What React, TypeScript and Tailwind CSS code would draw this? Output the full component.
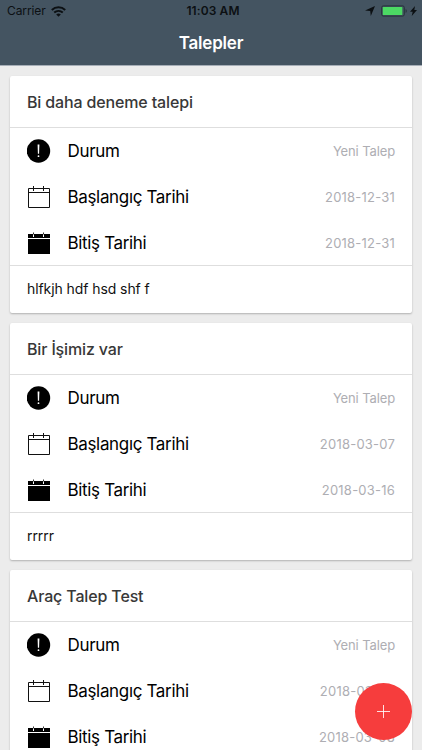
interface Request {
  title: string;
  status: string;
  start: string;
  end: string;
  note: string;
}

const requests: Request[] = [
  { title: 'Bi daha deneme talepi', status: 'Yeni Talep', start: '2018-12-31', end: '2018-12-31', note: 'hlfkjh hdf hsd shf f' },
  { title: 'Bir İşimiz var', status: 'Yeni Talep', start: '2018-03-07', end: '2018-03-16', note: 'rrrrr' },
  { title: 'Araç Talep Test', status: 'Yeni Talep', start: '2018-03-07', end: '2018-03-08', note: '' },
];

function AlertIcon() {
  return (
    <svg className="w-6 h-6" viewBox="0 0 24 24">
      <circle cx="11.5" cy="12" r="11.7" />
      <path d="M10.6 5.5h1.8l-.3 9.3h-1.2z" fill="#fff" />
      <circle cx="11.5" cy="17.2" r="0.9" fill="#fff" />
    </svg>
  );
}

function CalendarIcon() {
  return (
    <svg className="w-6 h-6" viewBox="0 0 24 24" fill="none" stroke="#111" strokeWidth="1">
      <path d="M1.5 3.5h21v19h-21zM1.5 7.5h21M6.5 1v5M16.5 1v5" />
    </svg>
  );
}

function CalendarFilledIcon() {
  return (
    <svg className="w-6 h-6" viewBox="0 0 24 24">
      <path d="M1 3h22v4H1zM1 8h22v15H1z" />
      <path d="M6.5 3v3M16.5 3v3" stroke="#fff" />
      <path d="M6.5 1.5v2M16.5 1.5v2" stroke="#333" />
    </svg>
  );
}

interface RowProps {
  icon: React.ReactNode;
  label: string;
  children: React.ReactNode;
}

function Row({ icon, label, children }: RowProps) {
  return (
    <div className="h-[46px] pl-[17px] pr-[17px] flex items-center">
      {icon}
      <span className="ml-[16.5px] pt-0.5 text-[17px] tracking-[-0.34px] text-black">{label}</span>
      <span className="ml-auto pt-px text-[13px] text-[#aeaeb3]">{children}</span>
    </div>
  );
}

function RequestCard({ request }: { request: Request }) {
  return (
    <article className="h-[237px] shrink-0 bg-white rounded-[2px] shadow-[0_1px_2px_rgba(0,0,0,0.25)]">
      <h2 className="h-[52px] px-[17px] pt-px flex items-center border-b border-[#dedede] text-base font-medium tracking-[-0.15px] text-[#383838]">
        {request.title}
      </h2>
      <div className="h-[138px] border-b border-[#dedede]">
        <Row icon={<AlertIcon />} label="Durum">
          <span className="tracking-[-0.12px]">{request.status}</span>
        </Row>
        <Row icon={<CalendarIcon />} label="Başlangıç Tarihi">
          <span className="tracking-[0.22px]">{request.start}</span>
        </Row>
        <Row icon={<CalendarFilledIcon />} label="Bitiş Tarihi">
          <span className="tracking-[0.22px]">{request.end}</span>
        </Row>
      </div>
      <p className="h-[46px] px-[17px] flex items-center text-sm tracking-[-0.08px] text-[#111]">{request.note}</p>
    </article>
  );
}

function StatusBar() {
  return (
    <div className="h-[22px] pl-[7px] pr-[5px] grid grid-cols-3 items-center text-[#0c1013]">
      <div className="flex items-center gap-[5px]">
        <span className="text-xs tracking-[-0.1px]">Carrier</span>
        <svg className="w-[15px] h-[11px]" viewBox="0 0 15 11" fill="none" stroke="currentColor" strokeWidth="2">
          <path d="M.8 4C4.6.3 10.4.3 14.2 4M3.2 6.6c2.5-2.2 6.1-2.2 8.6 0" />
          <path d="M7.5 10.8 5.2 8.4c1.4-1.1 3.2-1.1 4.6 0z" fill="currentColor" stroke="none" />
        </svg>
      </div>
      <span className="pl-0.5 text-center text-xs font-semibold tracking-[0.1px]">11:03 AM</span>
      <div className="flex items-center justify-end">
        <svg className="w-[10px] h-[10px] mr-[6px]" viewBox="0 0 10 10" fill="currentColor">
          <path d="M10 0 5.8 10 5.2 5 0 4.5z" />
        </svg>
        <svg className="w-[27px] h-3 mr-[2px]" viewBox="0 0 27 12">
          <rect x="0.7" y="0.9" width="22.6" height="10.2" rx="1.6" fill="none" stroke="#26323a" />
          <rect x="1.8" y="2" width="19.5" height="8" rx="0.6" fill="#4cd964" />
          <path d="M24.6 4c1.6.7 1.6 3.3 0 4z" fill="#26323a" />
        </svg>
        <svg className="w-[7px] h-[10px]" viewBox="0 0 6 10" preserveAspectRatio="none" fill="currentColor">
          <path d="M4.3 0 0 5.7h2.3L1.5 10 6 4H3.7z" />
        </svg>
      </div>
    </div>
  );
}

export default function App() {
  return (
    <div className="relative w-[422px] h-[750px] overflow-hidden bg-[#ececec] font-[Inter,'Liberation_Sans',sans-serif]">
      <header className="h-[66px] bg-[#445461] border-b border-[#a6aeb7]">
        <StatusBar />
        <h1 className="h-[42px] pt-0.5 flex items-center justify-center text-[17px] font-semibold tracking-[-0.2px] text-white">
          Talepler
        </h1>
      </header>

      <main className="px-2.5 pt-2.5 flex flex-col gap-2.5">
        {requests.map((request) => (
          <RequestCard key={request.title} request={request} />
        ))}
      </main>

      {/* Floating add button */}
      <button
        aria-label="Yeni talep ekle"
        className="absolute left-[354.5px] top-[682.5px] w-[57px] h-[57px] rounded-full bg-[#f63d3d] flex items-center justify-center"
      >
        <svg className="w-[13px] h-[13px]" viewBox="0 0 13 13" stroke="#fff" strokeOpacity="0.85">
          <path d="M6.5 0v13M0 6.5h13" />
        </svg>
      </button>
    </div>
  );
}
